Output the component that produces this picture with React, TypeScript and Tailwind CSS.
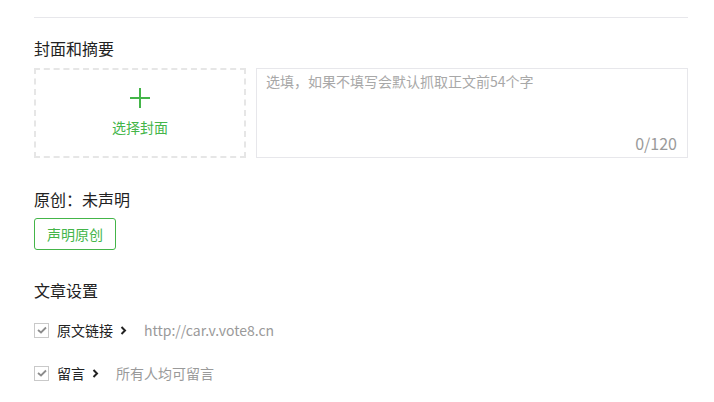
const font = { fontFamily: '"Noto Sans CJK SC", "Noto Sans", sans-serif' };

function Chevron() {
  return (
    <svg width="7" height="9" viewBox="0 0 7 9" className="shrink-0">
      <path d="M1.5 1 L5 4.5 L1.5 8" fill="none" stroke="#222" strokeWidth="2" />
    </svg>
  );
}

function CheckBox() {
  return (
    <span className="flex h-[15px] w-[15px] shrink-0 items-center justify-center border border-[#c9c9c9] bg-white">
      <svg width="10" height="8" viewBox="0 0 10 8">
        <path d="M1 4 L4 6.5 L9 1.5" fill="none" stroke="#8c8c8c" strokeWidth="1.8" />
      </svg>
    </span>
  );
}

function SettingRow({ label, value, valueGap }: { label: string; value: string; valueGap: string }) {
  return (
    <div className="flex h-5 items-center">
      <CheckBox />
      <span className="ml-[8px] text-[14px] leading-5 text-[#222]">{label}</span>
      <span className="ml-[7px]">
        <Chevron />
      </span>
      <span className={`${valueGap} text-[14px] leading-5 text-[#9a9a9a]`}>{value}</span>
    </div>
  );
}

export default function App() {
  return (
    <div className="min-h-[402px] w-[714px] bg-white" style={font}>
      <div className="ml-[34px] w-[654px] pt-[17px]">
        <div className="border-t border-[#e7e7eb]" />

        <h2 className="mt-[18px] text-[16px] leading-6 text-[#222]">封面和摘要</h2>

        <div className="mt-[8px] flex gap-[10px]">
          <div className="flex h-[90px] w-[212px] shrink-0 cursor-pointer flex-col items-center border-2 border-dashed border-[#e6e6e6]">
            <svg width="20" height="20" viewBox="0 0 20 20" className="mt-[18px]">
              <path d="M10 0 V20 M0 10 H20" stroke="#44b549" strokeWidth="2" />
            </svg>
            <span className="mt-[9px] text-[14px] leading-5 text-[#44b549]">选择封面</span>
          </div>

          <div className="flex h-[90px] flex-1 flex-col border border-[#e7e7eb]">
            <textarea
              className="flex-1 resize-none px-[9px] pt-[2px] text-[14px] leading-5 text-[#222] outline-none placeholder:text-[#a8a8a8]"
              placeholder="选填，如果不填写会默认抓取正文前54个字"
            />
            <div className="pb-[4px] pr-[10px] text-right text-[16px] leading-5 text-[#9a9a9a]">0/120</div>
          </div>
        </div>

        <div className="mt-[29px] text-[16px] leading-6 text-[#222]">原创：未声明</div>

        <button className="mt-[7px] flex h-[32px] w-[82px] items-center justify-center rounded-[3px] border border-[#44b549] bg-white text-[14px] text-[#44b549]">
          声明原创
        </button>

        <h2 className="mt-[28px] text-[16px] leading-6 text-[#222]">文章设置</h2>

        <div className="mt-[18px]">
          <SettingRow label="原文链接" value="http://car.v.vote8.cn" valueGap="ml-[17px]" />
        </div>
        <div className="mt-[23px]">
          <SettingRow label="留言" value="所有人均可留言" valueGap="ml-[17px]" />
        </div>
      </div>
    </div>
  );
}
